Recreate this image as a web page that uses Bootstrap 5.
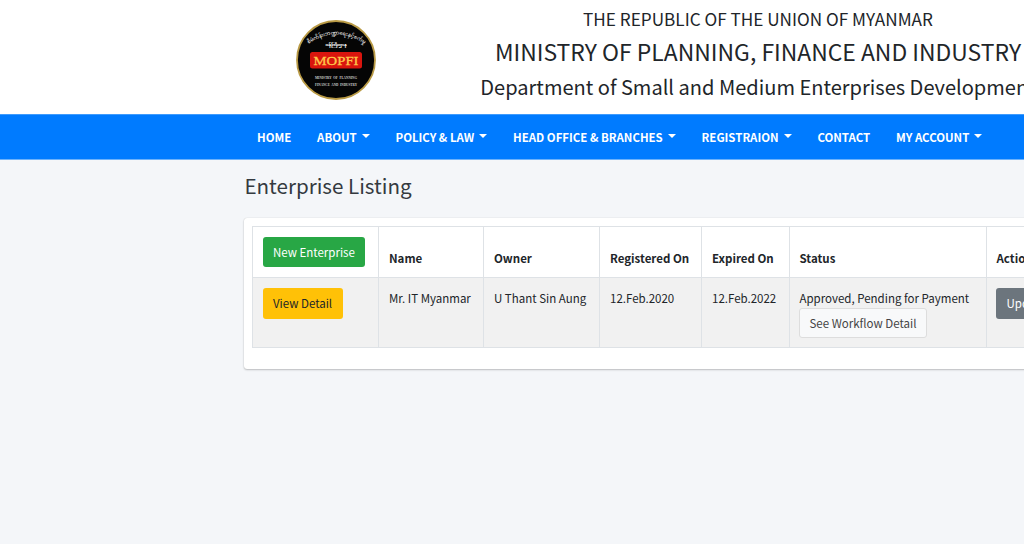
<!DOCTYPE html>
<html lang="en">
<head>
<meta charset="utf-8">
<meta name="viewport" content="width=device-width, initial-scale=1">
<title>Enterprise Listing</title>
<link href="https://cdn.jsdelivr.net/npm/bootstrap@5.3.0/dist/css/bootstrap.min.css" rel="stylesheet">
<style>
html{overflow:hidden}
body{font-family:"Noto Sans CJK JP","Source Sans Pro",sans-serif;font-size:11.5px;line-height:19.2px;color:#212529;background:#f4f6f9;overflow:hidden;height:544px}
.page{width:1388px}
.site-inner{width:912px;margin:0 auto}
.masthead{height:114px;background:#fff}
.logo{width:80px;height:80px;margin:20px 0 0 58px}
.titles{width:570px;margin-left:97px;white-space:nowrap}
.t1{font-size:17.17px;line-height:20px;padding-top:9px}
.t2{font-size:22.9px;line-height:30px;padding-top:7px}
.t3{font-size:20.05px;line-height:26px;padding-top:8px}
.mainbar{height:46px;background:#007bff;border-top:1px solid #3f9bfc;border-bottom:1px solid #6db2fb}
.mainbar .nav{gap:25.8px;padding-left:19px}
.mainbar .nav-link{font-weight:700;font-size:11.45px;line-height:19px;color:#fff;padding:0;white-space:nowrap}
.mainbar .dropdown-toggle::after{margin-left:5px;border-width:4px 4px 0;vertical-align:3.5px}
.heading{font-size:20.6px;font-weight:400;line-height:26px;color:#343a40;padding:12px 0 1px 6.4px}
.panel{margin:19px 6px 0;height:151px;padding:8px;border:0;border-radius:3px;box-shadow:0 0 1px rgba(0,0,0,.2),0 1px 2px rgba(0,0,0,.22)}
.listing{table-layout:fixed;width:1000px;margin:0;border-color:#dee2e6;--bs-table-striped-bg:#f1f1f1}
.listing th,.listing td{padding:10px;white-space:nowrap;vertical-align:top}
.listing th{height:51px;vertical-align:bottom;color:#212529;padding-bottom:9px}
.listing th:first-child{padding-bottom:10px}
.listing td{height:70px;color:#343a40;padding-top:10.6px;padding-bottom:9px}
.listing td:first-child,.listing td:last-child{padding-top:10px}
.listing .btn{font-size:11.5px;line-height:18px;padding:5px 9.4px;border-radius:3px;height:30.4px;margin-left:-.4px}
.btn-new{background:#28a745;color:#fff}.btn-view{background:#ffc107;color:#212529}.btn-up{background:#6c757d;color:#fff}
.listing .btn-flow{background:#f8f9fa;border-color:#ddd;color:#444;margin-top:-.4px}
</style>
</head>
<body>
<div class="page">
<header class="masthead"><div class="site-inner d-flex">
<svg class="logo flex-shrink-0" viewBox="0 0 80 80">
<circle cx="40" cy="40" r="39" fill="#050505" stroke="#b99a45" stroke-width="1.8"/>
<path id="arc" d="M12 24Q40 5 69 24" fill="none"/>
<g fill="#fff" font-family="Noto Sans Myanmar,Padauk,sans-serif" font-size="5">
<text text-anchor="middle"><textPath href="#arc" startOffset="50%" textLength="60">စီမံကိန်း၊ဘဏ္ဍာရေးနှင့်စက်မှု</textPath></text>
<text x="40" y="25.500" font-size="4.200" stroke="#fff" stroke-width=".2" text-anchor="middle" textLength="21" lengthAdjust="spacingAndGlyphs">ဝန်ကြီးဌာန</text></g>
<rect x="14" y="32" width="52" height="16.500" rx="2.500" fill="#d9150e"/>
<text x="40" y="45" text-anchor="middle" font-family="Liberation Serif,serif" font-size="13.500" fill="#ffc64a" stroke="#ffc64a" stroke-width=".3" textLength="45" lengthAdjust="spacingAndGlyphs">MOPFI</text>
<g fill="#ccc" font-family="Liberation Serif,serif" font-size="4" font-weight="700" text-anchor="middle" word-spacing="1"><text x="40" y="59" textLength="42" lengthAdjust="spacingAndGlyphs">MINISTRY OF PLANNING</text><text x="40" y="65.500" textLength="42" lengthAdjust="spacingAndGlyphs">FINANCE AND INDUSTRY</text></g>
</svg>
<div class="titles text-center flex-shrink-0"><div class="t1">THE REPUBLIC OF THE UNION OF MYANMAR</div><div class="t2">MINISTRY OF PLANNING, FINANCE AND INDUSTRY</div><div class="t3">Department of Small and Medium Enterprises Development</div></div>
</div></header>
<nav class="mainbar"><ul class="nav site-inner flex-nowrap align-items-center h-100">
<li><a class="nav-link">HOME</a></li>
<li><a class="nav-link dropdown-toggle">ABOUT</a></li>
<li><a class="nav-link dropdown-toggle">POLICY &amp; LAW</a></li>
<li><a class="nav-link dropdown-toggle">HEAD OFFICE &amp; BRANCHES</a></li>
<li><a class="nav-link dropdown-toggle">REGISTRAION</a></li>
<li><a class="nav-link">CONTACT</a></li>
<li><a class="nav-link dropdown-toggle">MY ACCOUNT</a></li>
</ul></nav>
<main class="site-inner"><h1 class="heading mb-0">Enterprise Listing</h1>
<div class="card panel"><table class="table table-bordered table-striped listing">
<colgroup><col style="width:126px"><col style="width:105px"><col style="width:116px"><col style="width:102px"><col style="width:87.500px"><col style="width:197px"><col></colgroup>
<thead><tr><th><a class="btn btn-new">New Enterprise</a></th><th>Name</th><th>Owner</th><th>Registered On</th><th>Expired On</th><th>Status</th><th>Action</th></tr></thead>
<tbody><tr><td><a class="btn btn-view">View Detail</a></td><td>Mr. IT Myanmar</td><td>U Thant Sin Aung</td><td>12.Feb.2020</td><td>12.Feb.2022</td><td>Approved, Pending for Payment<br><a class="btn btn-flow">See Workflow Detail</a></td><td><a class="btn btn-up">Update</a></td></tr></tbody></table></div>
</main></div>
<script src="https://cdn.jsdelivr.net/npm/bootstrap@5.3.0/dist/js/bootstrap.bundle.min.js"></script>
</body></html>
